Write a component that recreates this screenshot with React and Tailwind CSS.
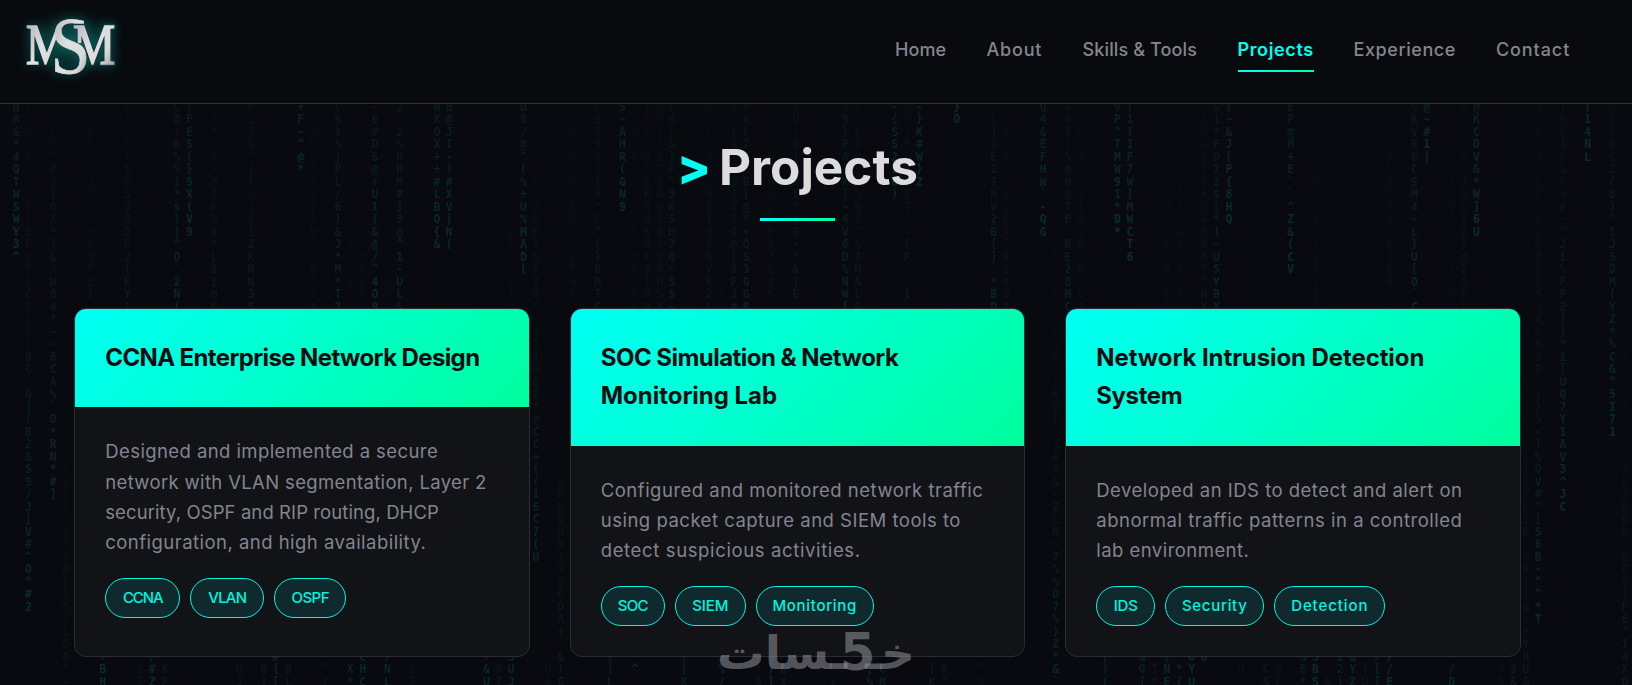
import clsx from "clsx";

const navLinks = [
  { label: "Home", className: "w-[51.5px] tracking-[0.05px]" },
  { label: "About", className: "w-[56px] tracking-[0.8px]" },
  { label: "Skills & Tools", className: "w-[115px] tracking-[0.14px]" },
  { label: "Projects", className: "w-[76px] tracking-[0.62px]", active: true },
  { label: "Experience", className: "w-[102.5px] tracking-[0.58px]" },
  { label: "Contact", className: "w-[74px] tracking-[0.9px]" },
];

const projects = [
  {
    title: [
      { text: "CCNA Enterprise Network Design", className: "tracking-[-0.62px]" },
    ],
    description: [
      { text: "Designed and implemented a secure", className: "tracking-[0.41px]" },
      { text: "network with VLAN segmentation, Layer 2", className: "tracking-[0.35px]" },
      { text: "security, OSPF and RIP routing, DHCP", className: "tracking-[0.09px]" },
      { text: "configuration, and high availability.", className: "tracking-[0.47px]" },
    ],
    tags: [
      { text: "CCNA", className: "w-[75px] tracking-[-1.1px]" },
      { text: "VLAN", className: "w-[74px] tracking-[-0.8px]" },
      { text: "OSPF", className: "w-[72px] tracking-[-0.5px]" },
    ],
  },
  {
    title: [
      { text: "SOC Simulation & Network", className: "tracking-[-0.53px]" },
      { text: "Monitoring Lab", className: "tracking-[-0.02px]" },
    ],
    description: [
      { text: "Configured and monitored network traffic", className: "tracking-[0.5px]" },
      { text: "using packet capture and SIEM tools to", className: "tracking-[0.5px]" },
      { text: "detect suspicious activities.", className: "tracking-[0.63px]" },
    ],
    tags: [
      { text: "SOC", className: "w-[64px] tracking-[-0.7px]" },
      { text: "SIEM", className: "w-[71px] tracking-[-0.15px]" },
      { text: "Monitoring", className: "w-[118px] tracking-[0.7px]" },
    ],
  },
  {
    title: [
      { text: "Network Intrusion Detection", className: "tracking-[-0.09px]" },
      { text: "System", className: "tracking-[-0.4px]" },
    ],
    description: [
      { text: "Developed an IDS to detect and alert on", className: "tracking-[0.48px]" },
      { text: "abnormal traffic patterns in a controlled", className: "tracking-[0.52px]" },
      { text: "lab environment.", className: "tracking-[0.46px]" },
    ],
    tags: [
      { text: "IDS", className: "w-[59px] tracking-[-0.2px]" },
      { text: "Security", className: "w-[99px] tracking-[0.7px]" },
      { text: "Detection", className: "w-[111px] tracking-[0.9px]" },
    ],
  },
];

// [column, first row, characters, brightness of the last character]
const rain = [
  [1, 0, "BRG*4QTWSWY3^", 0.3],
  [2, 0, "I+M32/^*T]EF2*[CR|6|9C`Q][B2&S9/J|V#^O^#2", 0.3],
  [4, 0, "J/(*^#9IDX*]&/W84*~-6CA%`D*RN*#]", 0.28],
  [5, 19, "@S02$&KQ)N9&92@274D[$O/LOO^-", 0.13],
  [7, 0, "T:SFT%]T(J*#3*2I", 0.1],
  [8, 9, "S`:*39&%", 0.06],
  [10, 0, "(*`1*$FSVQDE2{EY1", 0.14],
  [12, 7, "*S(-^3*EYR", 0.06],
  [14, 0, "C8/6%%]*$)]^O`2N(", 0.26],
  [15, 0, "|FES(}9X(V9", 0.28],
  [17, 0, "@1*`7-M9PB4*L$I@&", 0.14],
  [20, 0, "PL}&^|[-/$]ZKNN35", 0.16],
  [24, 0, "+F~^@*", 0.28],
  [25, 0, "~EMMEA(X}$N^~S*/@", 0.1],
  [27, 0, "CK$%|PL/6)&J*M*T7", 0.24],
  [28, 5, "-*~Y{[D9O36@", 0.06],
  [29, 7, "*:$[`#NWEG", 0.06],
  [30, 0, "~6#DS@+UI{&@/^4O9", 0.27],
  [31, 10, "3%D-&5R", 0.06],
  [32, 0, "2`2%NHM#]9@^1-UL%", 0.24],
  [35, 0, "WXOX++#LBQ{&", 0.28],
  [36, 0, "B@JI-)#XV|N(", 0.28],
  [41, 10, "#29*&1*", 0.07],
  [42, 0, "D9/@^(%+U%MAD(", 0.28],
  [43, 0, "E(28%)VV7EFI6FIG*~311UQI*@CC+{(16C7(U", 0.25],
  [45, 30, "&RKDNN)X9CDA+`&)G", 0.16],
  [46, 0, "*A@EOHO3RB%`2T4F", 0.09],
  [48, 0, "PBSS$){A^F^{}BMTG", 0.15],
  [50, 0, "S~AHR(GN9", 0.28],
  [51, 0, "%SCGK2*S5*S^FH*%H", 0.09],
  [52, 0, "IF##U(KRQU5VX3]#V", 0.12],
  [53, 0, "@W[)IQINN668S0H%X", 0.12],
  [54, 0, "L4|&}F^3KSH7Q~S$~", 0.2],
  [57, 0, "4$(36X*5E{X48VK2L", 0.12],
  [58, 7, "@$E@+*`J$%H", 0.07],
  [59, 0, "3^{&?ZZJT8G@{$FJ#", 0.16],
  [60, 0, "#VL7PCB[@*+QS3GGR", 0.21],
  [62, 0, "*2:`W(OSCBPR7&@%", 0.1],
  [64, 0, "JU|Q]#AI*#G-*&|E", 0.15],
  [68, 0, "%9}P8[X]~4V6D%NW[", 0.24],
  [69, 0, "S~LD9Y*%N{^A7M&LG", 0.14],
  [72, 0, "~{SS2I6)", 0.26],
  [73, 0, "D&)FLXTXT`-IP``1`", 0.14],
  [74, 0, "-}K#W}Z", 0.28],
  [77, 0, "}O", 0.28],
  [80, 0, "`L])E1THV2B{]`*BD", 0.22],
  [81, 0, "R*82P*~&@BA^BZ89X", 0.11],
  [84, 0, "Q4&EFHW`-QG", 0.28],
  [85, 0, "+`*-:O%&$*%@S+R&-II&N)|KO[^]#A&~ZLN~7%%D7%)Z*&`", 0.24],
  [86, 0, "&GT[%@H@7F`BE28MC", 0.2],
  [87, 1, "*C89G)@$N%G^&/%J", 0.11],
  [90, 0, "VP^TMW91*D*", 0.3],
  [91, 0, "[1TIF7W]MWCT6", 0.3],
  [94, 5, ":]%N(*&*N%&1", 0.08],
  [95, 4, ":S$?[(&#5BIS&", 0.08],
  [97, 0, "J$Q&@[{+%4PWA7^HX", 0.13],
  [98, 0, "&1*FD73$[*]~USYBY", 0.24],
  [99, 0, "[~&J[P{8HQ", 0.3],
  [104, 0, "EP@M+E``^Z&(CV", 0.3],
  [106, 5, "`KJ~#CI$#:I{O", 0.09],
  [112, 0, "*2%Q3E9MMX`&J&8-%", 0.1],
  [114, 0, "%KVR6CSM4~L}U[O`C", 0.26],
  [115, 0, "@~#1|", 0.3],
  [117, 4, "-:Z(DC&+0|%%{", 0.08],
  [118, 0, "HY2KOAJ&XI8}@2AF[", 0.12],
  [119, 0, "@KCDV&*W]6U", 0.3],
  [123, 22, "@*:#^S[{ZYL(E~SH]?Q:*YHU&", 0.14],
  [124, 0, "M&GNWZ&Z~UORZ&BM%4KH3O`|}%~)%QV#^]S6B-^^*T", 0.28],
  [126, 0, "]RK1P&H+#~^21%FP2])*1[UQ7Y1AV3^JC", 0.3],
  [128, 0, "[14NL", 0.3],
  [130, 0, "O}[VC2{8)^IJ5DM(YZ*%C&^5I71", 0.3],
  [131, 14, "Q8$#%:&*[2|%V~3XEXRBN/EE8|P6^I4XO", 0.16],
  // tails that run out under the cards
  [8, 44, "+BH", 0.3], [11, 45, "67", 0.1], [12, 44, "/#Z", 0.28], [13, 45, "XP", 0.13],
  [19, 45, "OJ", 0.12], [21, 45, "G)", 0.16], [22, 44, "#{[", 0.24], [23, 45, "BL", 0.15],
  [26, 45, "^I", 0.1], [28, 45, "X*", 0.24], [29, 44, "CHC", 0.26], [31, 44, "/NL", 0.26],
  [33, 45, "22", 0.1], [39, 44, "+&U", 0.26], [40, 45, "#7", 0.12], [41, 44, "SUJ", 0.26],
  [44, 45, "U&", 0.09], [49, 44, "])L", 0.2], [51, 44, "^^", 0.28], [55, 44, "[[K", 0.2],
  [58, 44, "$%/", 0.25], [61, 45, "*$", 0.12], [62, 44, "&)]", 0.28], [63, 45, "&X", 0.15],
  [67, 45, "`+", 0.12], [70, 44, "&,%", 0.26], [71, 45, "CM", 0.2], [75, 45, "]K", 0.14],
  [76, 45, "R^", 0.14], [79, 45, "^A", 0.1], [89, 44, "[)(", 0.22], [92, 44, "&O{", 0.2],
  [93, 44, "*T*", 0.14], [94, 44, "[NE", 0.28], [95, 45, "*{", 0.22], [96, 44, "OYU", 0.28],
  [97, 44, "8", 0.28], [100, 45, "U", 0.08], [102, 45, "CS", 0.14], [103, 45, "3P", 0.1],
  [105, 44, "&E*", 0.18], [106, 44, "SBS", 0.28], [107, 45, "~&", 0.12], [108, 44, "22)", 0.2],
  [109, 44, "&YZ", 0.24], [110, 45, ")U", 0.12], [111, 44, "/[[", 0.22], [112, 44, "//E", 0.3],
  [117, 44, "*/D", 0.26], [121, 45, "*%", 0.1], [122, 45, "$&", 0.16],
];

function MatrixRain() {
  return (
    <svg
      className="absolute inset-0 w-full h-full font-bold"
      fontFamily='"DejaVu Sans Mono", monospace'
      fontSize="11.5"
      fill="#12a89c"
      textAnchor="middle"
      aria-hidden="true"
    >
      {rain.map(([col, row, chars, glow]) => (
        <text key={`${col}-${row}`}>
          {chars.split("").map((char, i) => (
            <tspan
              key={i}
              x={3.8 + col * 12.375}
              y={110.7 + (row + i) * 12.5}
              fillOpacity={glow * 0.75 * Math.pow(0.958, chars.length - 1 - i)}
            >
              {char}
            </tspan>
          ))}
        </text>
      ))}
    </svg>
  );
}

function Logo() {
  return (
    <svg
      width="140"
      height="100"
      viewBox="0 0 140 100"
      fontFamily='"Liberation Serif", serif'
      role="img"
      aria-label="MSM"
    >
      <defs>
        <linearGradient id="silver" x1="0" y1="0" x2="1" y2="1">
          <stop offset="0" stopColor="#a9a9b4" />
          <stop offset="0.45" stopColor="#e0e0e0" />
          <stop offset="0.7" stopColor="#dadada" />
          <stop offset="1" stopColor="#85858f" />
        </linearGradient>
        <radialGradient id="halo">
          <stop offset="0" stopColor="#0f6a5e" stopOpacity="0.7" />
          <stop offset="0.55" stopColor="#0a4a48" stopOpacity="0.35" />
          <stop offset="1" stopColor="#080a0f" stopOpacity="0" />
        </radialGradient>
        <clipPath id="leftM">
          <polygon points="20,20 60,20 60,30 49,66 20,66" />
        </clipPath>
        <clipPath id="rightM">
          <polygon points="70,20 120,20 120,66 88,66 84,43 70,43" />
        </clipPath>
      </defs>
      <ellipse cx="70" cy="44" rx="58" ry="40" fill="url(#halo)" />
      <g
        className="drop-shadow-[0_0_6px_rgba(0,190,180,0.35)]"
        fill="url(#silver)"
        stroke="url(#silver)"
        strokeWidth="0.8"
      >
        <g clipPath="url(#leftM)" strokeWidth="1.6">
          <text x="26" y="63.5" fontSize="56" textLength="42" lengthAdjust="spacingAndGlyphs">M</text>
        </g>
        <text x="50.5" y="73" fontSize="80" textLength="40" lengthAdjust="spacingAndGlyphs">S</text>
        <g clipPath="url(#rightM)" strokeWidth="1.6">
          <text x="73" y="63.5" fontSize="56" textLength="42" lengthAdjust="spacingAndGlyphs" stroke="#0b3b38" strokeWidth="4.5">M</text>
          <text x="73" y="63.5" fontSize="56" textLength="42" lengthAdjust="spacingAndGlyphs">M</text>
        </g>
      </g>
    </svg>
  );
}

function Header() {
  return (
    <header className="relative flex h-[104px] items-start justify-between border-b border-[#2f3135] bg-[#080a0e] pr-[62px]">
      <Logo />
      <nav className="flex gap-10 pt-[35px]">
        {navLinks.map((link) => (
          <a
            key={link.label}
            href="#"
            className={clsx(
              "relative h-[37px] whitespace-nowrap text-lg leading-[29px]",
              link.className,
              link.active ? "font-semibold text-[#00fff0]" : "font-medium text-[#85858f]"
            )}
          >
            {link.label}
            {link.active && (
              <span className="absolute bottom-0 left-0 h-[2px] w-full bg-linear-to-r from-[#00fff5] to-[#00ff9d]" />
            )}
          </a>
        ))}
      </nav>
    </header>
  );
}

function ProjectCard({ project }) {
  return (
    <article className="flex flex-col overflow-hidden rounded-xl border border-[#2b2d32] bg-[#121317]">
      <div className="bg-linear-135 from-[#00fff5] to-[#00ff9d] p-[30px]">
        <h3 className="text-2xl leading-[38.4px] font-bold text-[#0a0c10]">
          {project.title.map((line) => (
            <span key={line.text} className={clsx("block whitespace-nowrap", line.className)}>
              {line.text}
            </span>
          ))}
        </h3>
      </div>
      <div className="px-[30px] pt-[29px] pb-[30px]">
        <p className="mb-[21px] text-[18.5px] leading-[30.2px] text-[#838490]">
          {project.description.map((line) => (
            <span key={line.text} className={clsx("block whitespace-nowrap", line.className)}>
              {line.text}
            </span>
          ))}
        </p>
        <div className="flex gap-2.5">
          {project.tags.map((tag) => (
            <span
              key={tag.text}
              className={clsx(
                "flex h-10 items-center justify-center rounded-[20px] border border-[#00f5e4] bg-[#0f292c] text-[15px] font-medium text-[#00f5e0]",
                tag.className
              )}
            >
              {tag.text}
            </span>
          ))}
        </div>
      </div>
    </article>
  );
}

function Watermark() {
  return (
    <svg
      className="absolute top-[622px] left-[710px]"
      width="212"
      height="60"
      viewBox="0 0 212 60"
      fontFamily='"DejaVu Sans", sans-serif'
      fontWeight="bold"
      fill="#8d8e96"
      fillOpacity="0.58"
      direction="rtl"
    >
      <text x="205" y="47" fontSize="44" textLength="50" lengthAdjust="spacingAndGlyphs">خـ</text>
      <text x="130" y="48" fontSize="51" direction="ltr">5</text>
      <text x="137" y="47" fontSize="46" textLength="130" lengthAdjust="spacingAndGlyphs">ـسات</text>
    </svg>
  );
}

export default function App() {
  return (
    <div className="relative h-[685px] overflow-hidden bg-[#080a0f] font-[Inter,sans-serif]">
      <MatrixRain />
      <Header />

      <main className="relative pr-[37px]">
        <div className="flex flex-col items-center">
          <h2 className="mt-[34px] flex h-[58px] items-center gap-[8px] text-[49.5px] leading-[58px] font-bold text-[#dcdcdc]">
            <span className="font-extrabold text-[#00fff5]">&gt;</span>
            <span>Projects</span>
          </h2>
          <span className="mt-[22px] h-[3px] w-[75px] bg-linear-to-r from-[#00fff5] to-[#00ff9d]" />
        </div>

        <div className="mx-auto mt-[87px] grid w-[1446.5px] grid-cols-3 gap-10">
          {projects.map((project) => (
            <ProjectCard key={project.title[0].text} project={project} />
          ))}
        </div>
      </main>

      <Watermark />
    </div>
  );
}
